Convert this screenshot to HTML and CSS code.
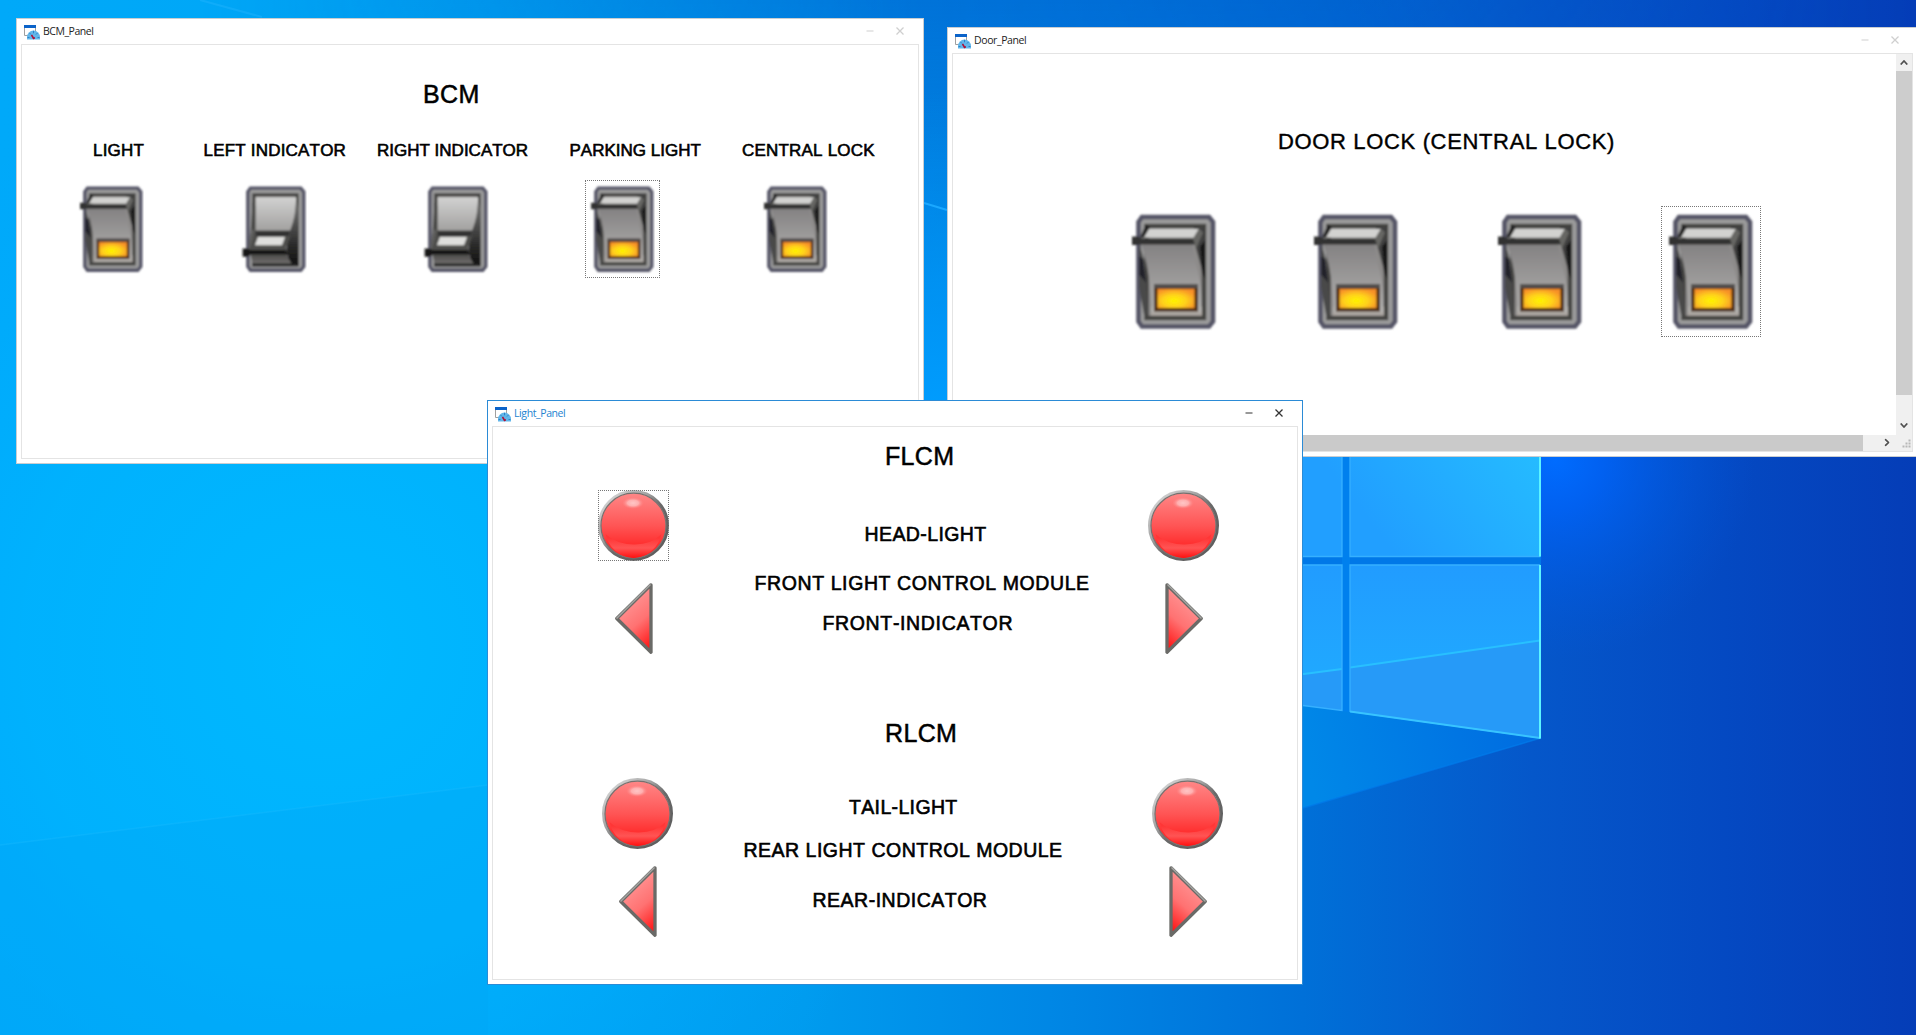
FILE: index.html
```html
<!DOCTYPE html>
<html lang="en">
<head>
<meta charset="utf-8">
<title>Panels</title>
<link rel="stylesheet" href="styles.css">
</head>
<body>
<svg class="wallpaper" viewBox="0 0 1916 1035" preserveAspectRatio="none" aria-hidden="true">
  <defs>
    <linearGradient id="base" x1="0" x2="1916" y1="0" y2="0" gradientUnits="userSpaceOnUse">
      <stop offset="0" stop-color="#00a9f9"/><stop offset=".26" stop-color="#00a5f4"/><stop offset=".42" stop-color="#009bee"/>
      <stop offset=".56" stop-color="#0085e4"/><stop offset=".68" stop-color="#0070d8"/><stop offset=".8" stop-color="#0557ca"/>
      <stop offset=".9" stop-color="#0449c2"/><stop offset="1" stop-color="#053db7"/>
    </linearGradient>
    <linearGradient id="top" x1="0" x2="0" y1="0" y2="450" gradientUnits="userSpaceOnUse">
      <stop offset="0" stop-color="#0054c8" stop-opacity=".5"/><stop offset="1" stop-color="#0060d0" stop-opacity="0"/>
    </linearGradient>
    <linearGradient id="topfade" x1="200" x2="1916" y1="0" y2="0" gradientUnits="userSpaceOnUse">
      <stop offset="0" stop-color="#000"/><stop offset=".42" stop-color="#fff"/><stop offset=".65" stop-color="#bbb"/><stop offset="1" stop-color="#000"/>
    </linearGradient>
    <mask id="topmask"><rect width="1916" height="450" fill="url(#topfade)"/></mask>
    <radialGradient id="cyan" cx="330" cy="650" r="620" gradientUnits="userSpaceOnUse">
      <stop offset="0" stop-color="#00b9ff"/><stop offset=".5" stop-color="#00b4ff" stop-opacity=".75"/><stop offset="1" stop-color="#00a8ff" stop-opacity="0"/>
    </radialGradient>
    <radialGradient id="gap" cx="940" cy="420" r="330" gradientUnits="userSpaceOnUse">
      <stop offset="0" stop-color="#009dff"/><stop offset="1" stop-color="#0094f6" stop-opacity="0"/>
    </radialGradient>
    <radialGradient id="glow" cx="1555" cy="460" r="200" gradientUnits="userSpaceOnUse">
      <stop offset="0" stop-color="#006cff"/><stop offset=".25" stop-color="#0064fa" stop-opacity=".8"/><stop offset="1" stop-color="#0056dc" stop-opacity="0"/>
    </radialGradient>
    <linearGradient id="beam" x1="1303" x2="1541" y1="750" y2="690" gradientUnits="userSpaceOnUse">
      <stop offset="0" stop-color="#0088e8"/><stop offset="1" stop-color="#006ae0"/>
    </linearGradient>
    <linearGradient id="pane" x1="1400" x2="1541" y1="560" y2="450" gradientUnits="userSpaceOnUse">
      <stop offset="0" stop-color="#219fff"/><stop offset="1" stop-color="#25bcff"/>
    </linearGradient>
    <linearGradient id="pane2" x1="0" x2="0" y1="565" y2="672" gradientUnits="userSpaceOnUse">
      <stop offset="0" stop-color="#219cff"/><stop offset="1" stop-color="#20a8ff"/>
    </linearGradient>
  </defs>
  <rect width="1916" height="1035" fill="url(#base)"/>
  <rect width="1916" height="450" fill="url(#top)" mask="url(#topmask)"/>
  <rect width="1200" height="1035" fill="url(#cyan)"/>
  <circle cx="940" cy="420" r="330" fill="url(#gap)"/>
  <path d="M0 845 488 785V1035H0Z" fill="#00a4f5" opacity=".3"/>
  <path d="M0 845 488 785" stroke="#20beff" stroke-width="1.5" opacity=".3"/>
  <path d="M200 0 262 17" stroke="#2cb8ff" stroke-width="2" fill="none" opacity=".35"/>
  <path d="M924 203 947 210" stroke="#1aa8ff" stroke-width="2"/>
  <circle cx="1555" cy="460" r="200" fill="url(#glow)"/>
  <path d="M1250 440H1541V738L1250 823Z" fill="url(#beam)"/>
  <path d="M1303 808 1541 738" stroke="#0080f0" stroke-width="1.5" opacity=".6"/>
  <path d="M1303 450H1541V565H1303Z" fill="#0078e8"/>
  <path d="M1342 450h8v262l-8-1Z" fill="#0080ee"/>
  <path d="M1300 450h42v106.500h-42ZM1350 450h191v106.500h-191Z" fill="url(#pane)"/>
  <path d="M1300 565h42v145.500l-42-5.500ZM1350 565h191v173.500l-191-26.500Z" fill="url(#pane2)"/>
  <path d="M1300 674.500 1342 669v41.500l-42-5.500ZM1350 667.500l191-27v98l-191-26.500Z" fill="#269af8"/>
  <path d="M1300 674.500 1342 669M1350 667.500l190-27" stroke="#28c0ff" stroke-width="2"/>
  <path d="M1342 450v106.500h-39M1540 556.500h-190V450M1303 565h39v145.500l-39-5M1540 565h-190v147" fill="none" stroke="#36b0ff" stroke-width="1.300"/>
  <path d="M1350 711.500 1540 738" stroke="#38c4ff" stroke-width="2"/>
  <path d="M1540 450v106.500M1540 565v173.500" stroke="#5cf4ff" stroke-width="2"/>
</svg>

<svg class="defs" aria-hidden="true">
  <defs>
    <filter id="soft" x="-5%" y="-5%" width="110%" height="110%"><feGaussianBlur stdDeviation="1.2"/></filter>
    <linearGradient id="body" x1="0" x2="0" y1="0" y2="1"><stop offset="0" stop-color="#838182"/><stop offset="1" stop-color="#b2b1af"/></linearGradient>
    <linearGradient id="face" x1="0" x2="0" y1="0" y2="1"><stop offset="0" stop-color="#d2d2d1"/><stop offset="1" stop-color="#a09f9e"/></linearGradient>
    <linearGradient id="edge" x1="0" x2="0" y1="0" y2="1"><stop offset="0" stop-color="#777"/><stop offset=".7" stop-color="#2a2a29"/><stop offset="1" stop-color="#101010"/></linearGradient>
    <linearGradient id="front" x1="0" x2="0" y1="0" y2="1"><stop offset="0" stop-color="#4c4b4a"/><stop offset="1" stop-color="#72706f"/></linearGradient>
    <radialGradient id="amber" cx=".45" cy=".62" r=".65"><stop offset="0" stop-color="#fff400"/><stop offset=".5" stop-color="#ffd21c"/><stop offset="1" stop-color="#f78f28"/></radialGradient>
    <linearGradient id="rim" x1="0" x2="1" y1="0" y2="1"><stop offset=".1" stop-color="#d4d4d4"/><stop offset=".38" stop-color="#a0a0a0"/><stop offset=".55" stop-color="#686868"/><stop offset="1" stop-color="#5a5a5a"/></linearGradient>
    <linearGradient id="red" x1="0" x2="0" y1="0" y2="1"><stop offset="0" stop-color="#ff8787"/><stop offset=".5" stop-color="#ff5555"/><stop offset=".78" stop-color="#ff3030"/><stop offset="1" stop-color="#ff2424"/></linearGradient>
    <linearGradient id="bowl" x1="0" x2="0" y1="48" y2="68" gradientUnits="userSpaceOnUse"><stop offset="0" stop-color="#ff3636"/><stop offset=".5" stop-color="#ff5454"/><stop offset="1" stop-color="#ff1010"/></linearGradient>
    <radialGradient id="shine"><stop offset="0" stop-color="#ffc6c6"/><stop offset=".5" stop-color="#ffb0b0"/><stop offset="1" stop-color="#ff8080" stop-opacity="0"/></radialGradient>
    <linearGradient id="arrowred" x1="8" x2="42" y1="22" y2="62" gradientUnits="userSpaceOnUse"><stop offset="0" stop-color="#ff9292"/><stop offset=".45" stop-color="#ff7272"/><stop offset="1" stop-color="#ff0c0c"/></linearGradient>
    <g id="frame">
      <path d="M18 10.500H85L89 15.500V115L85 120H18L14.500 115V15.500Z" fill="#9b9b9b" stroke="#555566" stroke-width="4.600"/>
      <rect x="22.500" y="19.500" width="57.500" height="92" fill="#8d8b8a" stroke="#454543" stroke-width="4.400"/>
    </g>
    <symbol id="switch-on" viewBox="0 0 100 130">
      <g filter="url(#soft)">
        <use href="#frame"/>
        <path d="M27 100H78V109H27Z" fill="#aba6a0"/>
        <path d="M70 20H81V74L77 60 71 38Z" fill="#41413f"/>
        <path d="M76 40 81 34V72L78 66Z" fill="#181818"/>
        <path d="M15 36 20 54 24 108 20 108 15 80Z" fill="#4a4a48"/>
        <path d="M15 50 19 52 22 76 15 68Z" fill="#20202a"/>
        <path d="M17 37H68Q71 56 75 70Q78 83 77 106H28Q27 66 17 37Z" fill="url(#body)"/>
        <path d="M22 18 16 31H20L26 21Z" fill="#222"/>
        <path d="M25 22.500H75L70 31H20Z" fill="#d2d2d0"/>
        <path d="M75 22 69 32 72 42 79 26Z" fill="#666663"/>
        <path d="M8 30H14L18 32H69L71 38H14V38.500H8Z" fill="#333331"/>
        <rect x="30" y="78.500" width="44" height="26.500" fill="#4d2d14"/>
        <rect x="30" y="77.500" width="44" height="4" fill="#534f4d"/>
        <rect x="33.500" y="82.500" width="37" height="19" fill="url(#amber)"/>
      </g>
    </symbol>
    <symbol id="switch-off" viewBox="0 0 100 130">
      <g filter="url(#soft)">
        <use href="#frame"/>
        <path d="M25 22.500H79Q78 48 71 69H25Z" fill="url(#face)"/>
        <path d="M21 28 25 34V74L20 92 14 94 18 70Z" fill="#5d5d5b"/>
        <path d="M21 30V66" stroke="#2d2d2b" stroke-width="2"/>
        <path d="M79 28 82 40V113H70L66 92 68 74 72 64Q78 48 79 28Z" fill="url(#edge)"/>
        <path d="M24 67H71V75L65 90 68 98H10L18 90Z" fill="#4e4e4c"/>
        <path d="M25 67.500H70V74H25Z" fill="#333"/>
        <path d="M28 75.500H64L60 86.500H24Z" fill="#dededc"/>
        <path d="M7.500 91H14L18 93H65L69 99.500H18L14 102H7.500Z" fill="#161615"/>
        <path d="M18 99H66L73 112H21Z" fill="url(#front)"/>
        <path d="M20 113H82" stroke="#242423" stroke-width="4"/>
      </g>
    </symbol>
    <symbol id="lamp" viewBox="0 0 71 71">
      <circle cx="35.500" cy="35.500" r="34" fill="#fff" stroke="url(#rim)" stroke-width="3"/>
      <circle cx="35.500" cy="35.700" r="32.500" fill="url(#red)" stroke="#77706e" stroke-width="1.200"/>
      <path d="M7.500 44Q18 54 35.500 54.500T63.500 44A30 30 0 0 1 35.500 68 30 30 0 0 1 7.500 44Z" fill="url(#bowl)"/>
      <ellipse cx="35" cy="13" rx="11" ry="6" fill="url(#shine)"/>
    </symbol>
    <symbol id="arrow" viewBox="0 0 38 71">
      <path d="M36 1.800 1.800 35.500 36 69.200Z" fill="url(#arrowred)" stroke="#6a6a67" stroke-width="3.300" stroke-linejoin="round"/>
      <path d="M35.500 1.500 1.500 35.500" stroke="#a5a5a3" stroke-width="1.400"/>
    </symbol>
    <symbol id="app" viewBox="0 0 16 15">
      <path d="M.5 1V10.500H5M11.500 3V6" fill="none" stroke="#a0a0a0"/>
      <path d="M0 0H12V3H0Z" fill="#0b63c9"/>
      <path d="M3 14.500V12A6.500 6.500 0 0 1 16 12V14.500Z" fill="#62b6ea"/>
      <path d="M9.500 5.800v2.500M5.500 8l1.500 1.500M13.500 8l-1.500 1.500M3.500 12.500h2M15.500 12.500h-2" stroke="#2c84c8"/>
      <path d="M7.500 10 10 14M8.500 13h2.500" stroke="#b00f35" stroke-width="1.500"/>
    </symbol>
    <symbol id="min" viewBox="0 0 8 8"><path d="M.5 4H7.500" stroke="currentColor"/></symbol>
    <symbol id="close" viewBox="0 0 8 8"><path d="M.5.5 7.500 7.500M7.500.5.5 7.500" stroke="currentColor" stroke-width="1.300"/></symbol>
    <symbol id="chevron" viewBox="0 0 8 5"><path d="M.7 4.500 4 1 7.300 4.500" fill="none" stroke="#505050" stroke-width="1.700"/></symbol>
  </defs>
</svg>

<main class="desktop">
  <section class="window bcm">
    <header class="titlebar"><svg class="app"><use href="#app"/></svg><span class="name">BCM_Panel</span><svg class="ctl"><use href="#min"/></svg><svg class="ctl"><use href="#close"/></svg></header>
    <div class="client">
      <h1 class="heading">BCM</h1>
      <div class="labels">
        <span>LIGHT</span><span>LEFT INDICATOR</span><span class="tight">RIGHT INDICATOR</span><span class="tight">PARKING LIGHT</span><span>CENTRAL LOCK</span>
      </div>
      <div class="switches">
        <svg class="switch"><use href="#switch-on"/></svg>
        <svg class="switch"><use href="#switch-off"/></svg>
        <svg class="switch"><use href="#switch-off"/></svg>
        <svg class="switch focus"><use href="#switch-on"/></svg>
        <svg class="switch"><use href="#switch-on"/></svg>
      </div>
    </div>
  </section>

  <section class="window door">
    <header class="titlebar"><svg class="app"><use href="#app"/></svg><span class="name">Door_Panel</span><svg class="ctl"><use href="#min"/></svg><svg class="ctl"><use href="#close"/></svg></header>
    <div class="client">
      <div class="view">
        <h1 class="heading">DOOR LOCK (CENTRAL LOCK)</h1>
        <div class="switches">
          <svg class="switch"><use href="#switch-on"/></svg>
          <svg class="switch"><use href="#switch-on"/></svg>
          <svg class="switch"><use href="#switch-on"/></svg>
          <svg class="switch focus"><use href="#switch-on"/></svg>
        </div>
      </div>
      <div class="vbar"><svg class="chev"><use href="#chevron"/></svg><i class="thumb"></i><svg class="chev down"><use href="#chevron"/></svg></div>
      <div class="hbar"><i class="thumb"></i><svg class="chev right"><use href="#chevron"/></svg></div>
      <svg class="grip" viewBox="0 0 16 16"><path d="M12.500 5.500h2M9.500 8.500h2M12.500 8.500h2M6.500 11.500h2M9.500 11.500h2M12.500 11.500h2" stroke="#b8b8b8" stroke-width="2"/></svg>
    </div>
  </section>

  <section class="window light">
    <header class="titlebar"><svg class="app"><use href="#app"/></svg><span class="name">Light_Panel</span><svg class="ctl"><use href="#min"/></svg><svg class="ctl"><use href="#close"/></svg></header>
    <div class="client">
      <div class="module front">
        <div class="lamps"><svg class="lamp focus"><use href="#lamp"/></svg><svg class="arrow"><use href="#arrow"/></svg></div>
        <div class="texts">
          <h1 class="heading">FLCM</h1>
          <p class="device">HEAD-LIGHT</p>
          <p class="unit">FRONT LIGHT CONTROL MODULE</p>
          <p class="indicator">FRONT-INDICATOR</p>
        </div>
        <div class="lamps"><svg class="lamp"><use href="#lamp"/></svg><svg class="arrow flip"><use href="#arrow"/></svg></div>
      </div>
      <div class="module rear">
        <div class="lamps"><svg class="lamp"><use href="#lamp"/></svg><svg class="arrow"><use href="#arrow"/></svg></div>
        <div class="texts">
          <h1 class="heading">RLCM</h1>
          <p class="device">TAIL-LIGHT</p>
          <p class="unit">REAR LIGHT CONTROL MODULE</p>
          <p class="indicator">REAR-INDICATOR</p>
        </div>
        <div class="lamps"><svg class="lamp"><use href="#lamp"/></svg><svg class="arrow flip"><use href="#arrow"/></svg></div>
      </div>
    </div>
  </section>
</main>
</body>
</html>
```
FILE: styles.css
```css
* { box-sizing: border-box; }
html, body { margin: 0; height: 100%; overflow: hidden; background: #00a5f4; }
body {
  position: relative;
  font-family: "Liberation Sans", Arial, sans-serif;
  font-kerning: none;
  color: #000;
}
svg { display: block; overflow: visible; }
h1, p { margin: 0; font-weight: 400; white-space: nowrap; }
.wallpaper { position: absolute; left: 0; top: 0; width: 1916px; height: 1035px; }
.defs { position: absolute; width: 0; height: 0; }
.desktop { position: relative; width: 1916px; height: 1035px; overflow: hidden; }

/* windows on the desktop */
.window {
  position: absolute;
  display: flex;
  flex-direction: column;
  padding: 0 4px 4px;
  background: #fff;
  border: 1px solid #c9cdd1;
}
.bcm { left: 16px; top: 18px; width: 908px; height: 446px; }
.door { left: 947px; top: 27px; width: 971px; height: 430px; }
.light { left: 487px; top: 400px; width: 816px; height: 585px; border-color: #2b8bd6; }
.titlebar {
  display: flex;
  align-items: center;
  flex: none;
  height: 25px;
  padding: 0 15px 1px 3px;
  color: #cfcfcf;
}
.door .titlebar { padding-right: 14px; }
.app { width: 16px; height: 15px; margin-top: 2px; }
.name {
  flex: 1;
  margin-left: 3px;
  font: 10.5px/14px "Open Sans", "Noto Sans", sans-serif;
  letter-spacing: -.47px;
  color: #222;
}
.door .name, .light .name { letter-spacing: -.4px; }
.light .titlebar { color: #333; }
.light .name { color: #2383d0; }
.ctl { width: 8px; height: 8px; margin-left: 22px; }
.client { flex: 1; min-height: 0; border: 1.500px solid #e4e4e4; }

/* static text controls */
.heading { font-size: 25px; line-height: 25px; letter-spacing: .35px; -webkit-text-stroke: .5px #000; }
.labels, .texts p { -webkit-text-stroke: .6px #000; }

.switch { width: 75px; height: 98px; }
.focus { outline: 1px dotted #777; outline-offset: -1px; }

.bcm .heading { margin: 37px 0 0 401px; }
.labels {
  display: grid;
  grid-template-columns: 110.500px 173.500px 192.500px 172.500px auto;
  margin: 35px 0 0 71px;
  font-size: 17px;
  line-height: 17px;
  letter-spacing: .2px;
  white-space: nowrap;
}
.labels .tight { letter-spacing: 0; }
.bcm .switches {
  display: grid;
  grid-template-columns: 163px 181.500px 166.500px 173px 75px;
  margin: 21px 0 0 52px;
}

.door .client {
  display: grid;
  grid-template-columns: 1fr 16px;
  grid-template-rows: 1fr 16px;
}
.door .heading { margin: 76px 0 0 325px; font-size: 22px; line-height: 24px; letter-spacing: .65px; -webkit-text-stroke-width: .4px; }
.door .switches {
  display: grid;
  grid-template-columns: 181.500px 184px 171px 100px;
  margin: 52px 0 0 171px;
}
.door .switch { width: 100px; height: 131px; }
.vbar, .hbar { display: flex; align-items: center; background: #f0f0f0; }
.vbar { flex-direction: column; padding: 6px 0 7px; }
.vbar .thumb { width: 16px; height: 324px; margin-top: 6px; background: #cdcdcd; }
.hbar .thumb { flex: 1; height: 16px; background: #cacaca; }
.chev { width: 8px; height: 5px; flex: none; }
.down { margin-top: auto; transform: rotate(180deg); }
.right { margin: 0 5px 1px 20px; transform: rotate(90deg); }
.grip { width: 16px; height: 16px; background: #f0f0f0; }

/* lamps on the outside, texts in the middle */
.module { display: flex; align-items: flex-start; }
.front { height: 277px; padding: 17px 78px 0 105px; }
.rear { height: 270px; padding: 17px 74px 0 109px; }
.lamps { display: flex; flex-direction: column; align-items: center; flex: none; width: 71px; }
.lamp { width: 71px; height: 71px; margin-top: 46px; }
.arrow { width: 38px; height: 71px; margin-top: 22px; }
.rear .lamp { margin-top: 57px; }
.rear .arrow { margin-top: 17px; }
.flip { transform: scaleX(-1); }
.texts { display: flex; flex-direction: column; flex: 1; }
.texts p { font-size: 19.500px; line-height: 20px; }
.front .heading { margin-left: 216px; }
.front .device { margin: 55px 0 0 195.500px; letter-spacing: .4px; }
.front .unit { margin: 29px 0 0 85.500px; letter-spacing: .6px; }
.front .indicator { margin: 20px 0 0 153.500px; letter-spacing: .65px; }
.rear .heading { margin-left: 212px; }
.rear .device { margin: 51px 0 0 176px; letter-spacing: .35px; }
.rear .unit { margin: 23px 0 0 70.500px; letter-spacing: .5px; }
.rear .indicator { margin: 30px 0 0 139.500px; letter-spacing: .5px; }
```
